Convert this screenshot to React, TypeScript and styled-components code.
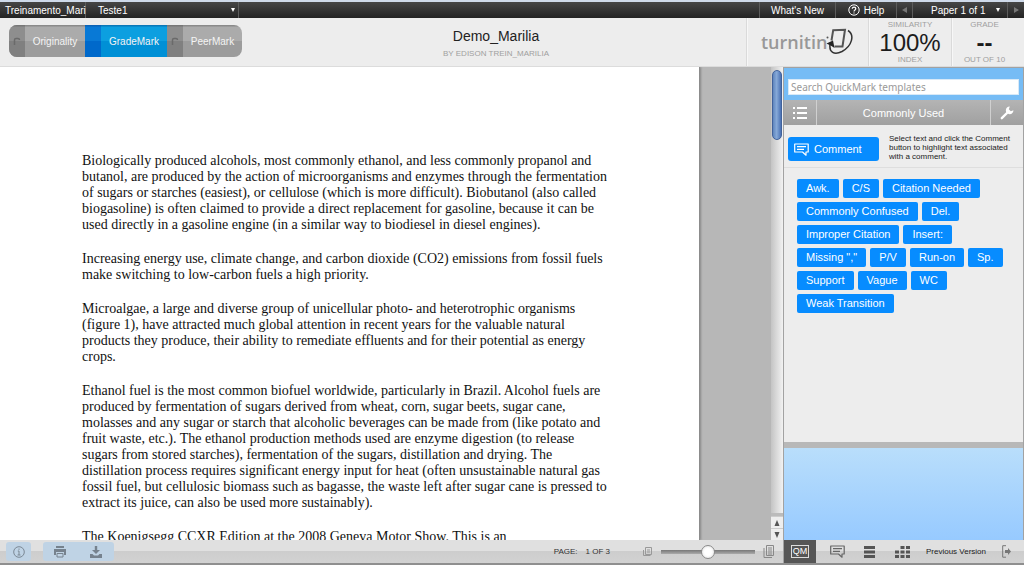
import React, { useState } from "react";
import styled, { createGlobalStyle, css } from "styled-components";

const Global = createGlobalStyle`
  *, *::before, *::after { box-sizing: border-box; }
  body { margin: 0; font-family: "Liberation Sans", Arial, sans-serif; color: #333; background: #b5b5b5; }
  button, input, select { font-family: inherit; margin: 0; }
  button { border: 0; padding: 0; background: none; color: inherit; cursor: pointer; }
  p, h1, h2 { margin: 0; font-weight: normal; }
`;

const Screen = styled.div`
  display: grid;
  grid-template-rows: 18px 49px minmax(0, 1fr) 25px;
  height: 100vh;
`;

const TopBar = styled.nav`
  display: flex;
  border-top: 2px solid #cfdaea;
  background: linear-gradient(#464646, #232323);
  color: #fff;
  line-height: 16px;
`;
const TopItem = styled.button<{ $w: number; $left?: boolean }>`
  display: flex;
  align-items: center;
  justify-content: ${(p) => (p.$left ? "flex-start" : "center")};
  gap: 4px;
  width: ${(p) => p.$w}px;
  padding: ${(p) => (p.$left ? "0 0 0 5px" : "0")};
  border-right: 1px solid #5c5c5c;
  white-space: nowrap;
  font-size: 10px;
  &:last-child { border-right: 0; }
`;
const Picker = styled(TopItem)<{ $inset: number; $end: number }>`
  justify-content: space-between;
  padding: 0 ${(p) => p.$end}px 0 ${(p) => p.$inset}px;
`;
const TopSpace = styled.div`
  flex: 1;
  border-right: 1px solid #5c5c5c;
`;
const Arrow = styled.i<{ $dir: "down" | "left" | "right" }>`
  width: 0;
  height: 0;
  border: 3px solid transparent;
  ${(p) => p.$dir === "down" && css`border-width: 4px 2px 0; border-top-color: #fff;`}
  ${(p) => p.$dir === "left" && css`border-width: 3px 5px 3px 0; border-right-color: #777;`}
  ${(p) => p.$dir === "right" && css`border-width: 3px 0 3px 5px; border-left-color: #777;`}
`;

const Header = styled.header`
  display: flex;
  align-items: stretch;
  background: #ededed;
  border-bottom: 1px solid #dcdcdc;
`;
const Tabs = styled.div`
  display: flex;
  align-self: flex-start;
  height: 32px;
  margin: 7px 0 0 9px;
  border-radius: 8px;
  overflow: hidden;
`;
const TabMark = styled.span<{ $on: boolean }>`
  display: flex;
  align-items: center;
  justify-content: center;
  width: 16px;
  height: 32px;
  background: ${(p) => (p.$on ? "linear-gradient(#0b62b5 0 1px, #0879d6 2px 50%, #0069cb 50%)" : "linear-gradient(#777 0 1px, #8e8e8e 2px 50%, #808080 50%)")};
`;
const TabButton = styled.button<{ $on: boolean; $w: number }>`
  display: flex;
  align-items: center;
  width: ${(p) => p.$w}px;
  color: #f4f4f4;
  font-size: 10px;
  background: ${(p) => (p.$on ? "linear-gradient(#0a78b8 0 1px, #0c9fe0 2px 50%, #0090d6 50%)" : "linear-gradient(#8a8a8a 0 1px, #ababab 2px 50%, #9c9c9c 50%)")};
`;
const TabText = styled.span`
  flex: 1;
  text-align: center;
`;
const Heading = styled.div`
  flex: 1;
  padding: 9px 0 0 4px;
  text-align: center;
`;
const Title = styled.h1`
  font-size: 14px;
  line-height: 18px;
  color: #222;
`;
const Small = styled.p`
  font-size: 8px;
  line-height: 10px;
  color: #a0a0a0;
  white-space: nowrap;
`;
const Byline = styled(Small)`
  margin-top: 4px;
`;
const HeaderCell = styled.div<{ $w: number; $end?: number }>`
  display: flex;
  flex-direction: column;
  align-items: center;
  justify-content: space-between;
  width: ${(p) => p.$w}px;
  padding: 2px ${(p) => p.$end ?? 0}px 1px 0;
  border-left: 1px solid #dadada;
  box-shadow: inset 1px 0 0 #f7f7f7;
`;
const LogoCell = styled(HeaderCell)`
  flex-direction: row;
  justify-content: flex-start;
  padding: 0 0 0 14px;
`;
const LogoText = styled.span`
  font-family: "Open Sans", sans-serif;
  font-size: 18px;
  font-weight: 600;
  line-height: 30px;
  color: #989898;
`;
const LogoMark = styled.svg`
  margin-left: -2px;
`;
const Score = styled.strong<{ $bold?: boolean }>`
  font-size: 24px;
  line-height: 24px;
  font-weight: ${(p) => (p.$bold ? "bold" : "normal")};
  color: #1c1c1c;
`;

const Main = styled.main`
  display: grid;
  grid-template-columns: minmax(0, 1fr) 12px 241px;
  min-height: 0;
`;
const Viewer = styled.section`
  display: flex;
  min-width: 0;
  overflow: hidden;
  background: #b7b7b7;
`;
const Paper = styled.article`
  flex: 1;
  margin-right: 71px;
  padding: 86px 0 0 82px;
  background: #fff;
  border-right: 1px solid #8c8c8c;
  box-shadow: 1px 0 2px #888;
  font-family: "Liberation Serif", "Times New Roman", serif;
  font-size: 14px;
  line-height: 16px;
  color: #111;
  white-space: pre;
`;
const Paragraph = styled.p`
  margin-bottom: 18px;
`;
const ScrollTrack = styled.div`
  display: flex;
  flex-direction: column;
  justify-content: space-between;
  background: linear-gradient(90deg, #c4c4c4, #f2f2f2);
`;
const ScrollThumb = styled.div`
  height: 70px;
  margin: 3px 1px 0;
  border: 1px solid #41629b;
  border-radius: 5px;
  background: linear-gradient(90deg, #5f85bd, #86a9d8 45%, #4a71b3);
`;
const ScrollButtons = styled.div`
  display: flex;
  flex-direction: column;
  border-top: 3px solid #bbb;
`;
const ScrollButton = styled.button`
  display: flex;
  align-items: center;
  justify-content: center;
  height: 12px;
  background: #eee;
  border-top: 1px solid #ccc;
`;

const Side = styled.aside`
  display: flex;
  flex-direction: column;
  min-height: 0;
  border: solid #a2a2a2;
  border-width: 1px 1px 0 1px;
  background: #ededed;
`;
const SearchBox = styled.div`
  padding: 11px 4px 5px;
  background: #76bcf5;
`;
const SearchInput = styled.input`
  display: block;
  width: 100%;
  height: 16px;
  padding: 0 2px;
  border: 1px solid #d8e9f7;
  background: #fff;
  font-family: "Noto Sans", sans-serif;
  font-size: 10px;
  color: #333;
  &::placeholder { color: #999; opacity: 1; }
`;
const SetBar = styled.div`
  display: flex;
  height: 25px;
  background: linear-gradient(#b4b4b4, #a0a0a0);
  color: #fff;
`;
const SetButton = styled.button`
  display: flex;
  align-items: center;
  justify-content: center;
  width: 32px;
`;
const SetTitle = styled.h2`
  flex: 1;
  border: solid #d0d0d0;
  border-width: 0 1px;
  text-align: center;
  font-size: 11px;
  line-height: 26px;
`;
const CommentRow = styled.div`
  display: flex;
  align-items: flex-start;
  height: 43px;
  padding-left: 4px;
  border-bottom: 1px solid #dedede;
`;
const CommentButton = styled.button`
  display: flex;
  flex: none;
  align-items: center;
  gap: 5px;
  width: 91px;
  height: 24px;
  margin-top: 12px;
  padding-left: 6px;
  border-radius: 3px;
  background: #078cff;
  color: #fff;
  font-size: 11px;
`;
const Hint = styled.p`
  margin: 9px 0 0 10px;
  white-space: pre;
  font-size: 8px;
  line-height: 9px;
  color: #222;
`;
const Marks = styled.div`
  flex: 1;
  display: flex;
  flex-direction: column;
  gap: 4px;
  padding: 11px 0 0 13px;
`;
const MarkRow = styled.div`
  display: flex;
  gap: 4px;
`;
const Mark = styled.button`
  height: 19px;
  padding: 0 9px;
  border-radius: 2px;
  background: #078cff;
  color: #fff;
  font-size: 11px;
  line-height: 19px;
  white-space: nowrap;
`;
const Preview = styled.div`
  height: 98px;
  border-top: 6px solid #b8b8b8;
  background: linear-gradient(#b9defb, #97caff);
`;

const Footer = styled.footer`
  display: flex;
  align-items: stretch;
  border-bottom: 2px solid #8f8f8f;
  background: linear-gradient(#e0e0e0 0 50%, #cdcdcd 50%, #d2d2d2);
`;
const ToolGroup = styled.div<{ $gap: number }>`
  display: flex;
  align-items: center;
  margin: 2px 0 2px ${(p) => p.$gap}px;
  border-radius: 3px;
  background: #bfd3e5;
`;
const ToolButton = styled.button<{ $w: number }>`
  display: flex;
  align-items: center;
  justify-content: center;
  width: ${(p) => p.$w}px;
  height: 19px;
`;
const PageInfo = styled.div`
  display: flex;
  gap: 8px;
  margin-left: auto;
  font-size: 8px;
  line-height: 23px;
  color: #333;
`;
const Zoom = styled.label`
  display: flex;
  align-items: center;
  gap: 8px;
  margin: 0 8px 0 33px;
`;
const Slider = styled.input`
  appearance: none;
  width: 94px;
  height: 14px;
  margin: 0;
  border-radius: 2px;
  background: linear-gradient(#777, #aaa) center / 100% 4px no-repeat;
  &::-webkit-slider-thumb {
    appearance: none;
    width: 14px;
    height: 14px;
    border: 1px solid #8a8a8a;
    border-radius: 50%;
    background: radial-gradient(#fff 40%, #ddd);
  }
`;
const SideTools = styled.div`
  display: flex;
  width: 241px;
  border-left: 1px solid #a2a2a2;
`;
const SideTool = styled.button<{ $w: number; $on?: boolean }>`
  display: flex;
  align-items: center;
  justify-content: center;
  width: ${(p) => p.$w}px;
  background: ${(p) => (p.$on ? "#565656" : "none")};
  color: ${(p) => (p.$on ? "#fff" : "#222")};
  font-size: 8px;
  white-space: nowrap;
`;
const QmBadge = styled.span`
  width: 18px;
  border: 1px solid #ddd;
  font-size: 9px;
  line-height: 11px;
  text-align: center;
`;

const Bubble = ({ color }: { color: string }) => (
  <svg width="15" height="13" viewBox="0 0 15 13" fill="none" stroke={color} strokeWidth="1.2" strokeLinejoin="round">
    <path d="M.7 1h13.500v8h-2.200v3.200L8.500 9H.7z" />
    <path d="M3 3.700h9M3 6.300h7" />
  </svg>
);

const TABS = [
  { name: "Originality", w: 76 },
  { name: "GradeMark", w: 82 },
  { name: "PeerMark", w: 75 },
];

const MARKS = [
  ["Awk.", "C/S", "Citation Needed"],
  ["Commonly Confused", "Del."],
  ["Improper Citation", "Insert:"],
  ['Missing ","', "P/V", "Run-on", "Sp."],
  ["Support", "Vague", "WC"],
  ["Weak Transition"],
];

const TEXT = [
  `Biologically produced alcohols, most commonly ethanol, and less commonly propanol and
butanol, are produced by the action of microorganisms and enzymes through the fermentation
of sugars or starches (easiest), or cellulose (which is more difficult). Biobutanol (also called
biogasoline) is often claimed to provide a direct replacement for gasoline, because it can be
used directly in a gasoline engine (in a similar way to biodiesel in diesel engines).`,
  `Increasing energy use, climate change, and carbon dioxide (CO2) emissions from fossil fuels
make switching to low-carbon fuels a high priority.`,
  `Microalgae, a large and diverse group of unicellular photo- and heterotrophic organisms
(figure 1), have attracted much global attention in recent years for the valuable natural
products they produce, their ability to remediate effluents and for their potential as energy
crops.`,
  `Ethanol fuel is the most common biofuel worldwide, particularly in Brazil. Alcohol fuels are
produced by fermentation of sugars derived from wheat, corn, sugar beets, sugar cane,
molasses and any sugar or starch that alcoholic beverages can be made from (like potato and
fruit waste, etc.). The ethanol production methods used are enzyme digestion (to release
sugars from stored starches), fermentation of the sugars, distillation and drying. The
distillation process requires significant energy input for heat (often unsustainable natural gas
fossil fuel, but cellulosic biomass such as bagasse, the waste left after sugar cane is pressed to
extract its juice, can also be used more sustainably).`,
  `The Koenigsegg CCXR Edition at the 2008 Geneva Motor Show. This is an`,
];

export default function App() {
  const [tab, setTab] = useState("GradeMark");
  return (
    <Screen>
      <Global />
      <TopBar>
        <TopItem $w={86} $left>Treinamento_Mari</TopItem>
        <Picker $w={153} $inset={12} $end={3}>Teste1<Arrow $dir="down" /></Picker>
        <TopSpace />
        <TopItem $w={76}>What's New</TopItem>
        <TopItem $w={61}>
          <svg width="12" height="12" viewBox="0 0 12 12" fill="none" stroke="#fff">
            <circle cx="6" cy="6" r="5.2" />
            <path d="M4.3 4.8c0-2.4 3.5-2.2 3.5 0C7.8 6 6 6 6 7.4M6 8.4v1" strokeWidth="1.2" />
          </svg>
          Help
        </TopItem>
        <TopItem $w={16} aria-label="Previous paper"><Arrow $dir="left" /></TopItem>
        <Picker $w={95} $inset={18} $end={7}>Paper 1 of 1<Arrow $dir="down" /></Picker>
        <TopItem $w={16} aria-label="Next paper"><Arrow $dir="right" /></TopItem>
      </TopBar>

      <Header>
        <Tabs>
          {TABS.map((t) => (
            <TabButton key={t.name} $w={t.w} $on={tab === t.name} onClick={() => setTab(t.name)}>
              <TabMark $on={tab === t.name}>
                {tab !== t.name && (
                  <svg width="8" height="9" viewBox="0 0 8 9" fill="none">
                    <path d="M1.500 8V3Q1.500 1.500 3 1.500H5Q6.500 1.500 6.500 3" stroke="#6a6a6a" strokeWidth="1.5" />
                  </svg>
                )}
              </TabMark>
              <TabText>{t.name}</TabText>
            </TabButton>
          ))}
        </Tabs>
        <Heading>
          <Title>Demo_Marilia</Title>
          <Byline>BY EDISON TREIN_MARILIA</Byline>
        </Heading>
        <LogoCell $w={122}>
          <LogoText>turnitin</LogoText>
          <LogoMark width="29" height="28" viewBox="0 0 29 28" fill="none" stroke="#333">
            <path d="M6.500 12.500L8.200 2.200L20 1.700L17.500 18.500H9.500" stroke="#555" strokeWidth="2" />
            <path d="M23 2.500C30 7 27 18 17 23.500C9 27.500 4 24 5 16.500" strokeWidth="1.500" />
            <path d="M1.500 15.500L8 12.500L9.500 20L6.500 18z" fill="#222" stroke="none" />
            <circle cx="2.500" cy="9.500" r="1" fill="#555" stroke="none" />
          </LogoMark>
        </LogoCell>
        <HeaderCell $w={83}>
          <Small>SIMILARITY</Small>
          <Score>100%</Score>
          <Small>INDEX</Small>
        </HeaderCell>
        <HeaderCell $w={73} $end={7}>
          <Small>GRADE</Small>
          <Score $bold>--</Score>
          <Small>OUT OF 10</Small>
        </HeaderCell>
      </Header>

      <Main>
        <Viewer>
          <Paper>
            {TEXT.map((t) => <Paragraph key={t}>{t}</Paragraph>)}
          </Paper>
        </Viewer>
        <ScrollTrack>
          <ScrollThumb />
          <ScrollButtons>
            <ScrollButton aria-label="Scroll up">
              <svg width="6" height="6" viewBox="0 0 6 6"><path d="M3 0L5.500 6H.5z" fill="#555" /></svg>
            </ScrollButton>
            <ScrollButton aria-label="Scroll down">
              <svg width="6" height="6" viewBox="0 0 6 6"><path d="M3 6L5.500 0H.5z" fill="#555" /></svg>
            </ScrollButton>
          </ScrollButtons>
        </ScrollTrack>
        <Side>
          <SearchBox>
            <SearchInput aria-label="Search QuickMark templates" placeholder="Search QuickMark templates" />
          </SearchBox>
          <SetBar>
            <SetButton aria-label="List of sets">
              <svg width="14" height="12" viewBox="0 0 14 12" fill="#fff">
                <path d="M0 0h2v2H0zM4 0h10v2H4zM0 5h2v2H0zM4 5h10v2H4zM0 10h2v2H0zM4 10h10v2H4z" />
              </svg>
            </SetButton>
            <SetTitle>Commonly Used</SetTitle>
            <SetButton aria-label="Manage sets">
              <svg width="14" height="14" viewBox="0 0 14 14">
                <path d="M1.800 12.200L8 6" stroke="#fff" strokeWidth="2.400" strokeLinecap="round" />
                <path d="M9.800 .6A3.800 3.800 0 1 0 13.400 4.200L10.800 5.200L8.800 3.200z" fill="#fff" />
              </svg>
            </SetButton>
          </SetBar>
          <CommentRow>
            <CommentButton><Bubble color="#fff" />Comment</CommentButton>
            <Hint>{`Select text and click the Comment
button to highlight text associated
with a comment.`}</Hint>
          </CommentRow>
          <Marks>
            {MARKS.map((row) => (
              <MarkRow key={row[0]}>
                {row.map((m) => <Mark key={m}>{m}</Mark>)}
              </MarkRow>
            ))}
          </Marks>
          <Preview />
        </Side>
      </Main>

      <Footer>
        <ToolGroup $gap={6}>
          <ToolButton $w={25} aria-label="Information">
            <svg width="12" height="12" viewBox="0 0 12 12" fill="none" stroke="#7b8894">
              <circle cx="6" cy="6" r="5.300" />
              <path d="M6 2.500v1.300M4.800 5H6v4M4.500 9h3" />
            </svg>
          </ToolButton>
        </ToolGroup>
        <ToolGroup $gap={12}>
          <ToolButton $w={34} aria-label="Print">
            <svg width="12" height="12" viewBox="0 0 12 12" fill="#76828e">
              <path d="M2 0h8v2H2zM0 3h12v6h-2V6H2v3H0z" />
              <path d="M3 7.500h6v3.500H3z" fill="none" stroke="#76828e" />
            </svg>
          </ToolButton>
          <ToolButton $w={37} aria-label="Download">
            <svg width="12" height="12" viewBox="0 0 12 12" fill="#76828e">
              <path d="M4.800 0h2.400v4H10L6 8L2 4h2.800zM0 8h2.500l1.500 1.500h4L9.500 8H12v4H0z" />
            </svg>
          </ToolButton>
        </ToolGroup>
        <PageInfo><span>PAGE:</span><span>1 OF 3</span></PageInfo>
        <Zoom>
          <svg width="10" height="9" viewBox="0 0 10 9" fill="none" stroke="#999">
            <path d="M2.500 .5h6v7h-6zM.5 3v5.500h7M4 3h3M4 5h3" />
          </svg>
          <Slider type="range" min={0} max={100} defaultValue={50} aria-label="Zoom" />
          <svg width="12" height="13" viewBox="0 0 12 13" fill="none" stroke="#888">
            <path d="M3.500 .5h7v10h-7zM1 3v9.500h8M5 3h4M5 5h4M5 7h4M5 9h4" />
          </svg>
        </Zoom>
        <SideTools>
          <SideTool $w={32} $on aria-label="QuickMarks"><QmBadge>QM</QmBadge></SideTool>
          <SideTool $w={42} aria-label="Comments"><Bubble color="#666" /></SideTool>
          <SideTool $w={23} aria-label="Comment list">
            <svg width="11" height="12" viewBox="0 0 11 12" fill="#555">
              <path d="M0 0h11v3H0zM0 4.500h11v3H0zM0 9h11v3H0z" />
            </svg>
          </SideTool>
          <SideTool $w={42} aria-label="Rubric">
            <svg width="15" height="12" viewBox="0 0 15 12" fill="#555">
              <path d="M5.500 0h4v3h-4zM11 0h4v3h-4zM5.500 4.500h4v3h-4zM11 4.500h4v3h-4zM0 4.500h4v3H0zM0 9h4v3H0zM5.500 9h4v3h-4zM11 9h4v3h-4z" />
            </svg>
          </SideTool>
          <SideTool $w={66}>Previous Version</SideTool>
          <SideTool $w={35} aria-label="Exit">
            <svg width="9" height="13" viewBox="0 0 9 13" fill="none" stroke="#777">
              <path d="M4 .7H.7v11.500H4" />
              <path d="M3 5h3V3l3 3.500L6 10V8H3z" fill="#777" stroke="none" />
            </svg>
          </SideTool>
        </SideTools>
      </Footer>
    </Screen>
  );
}
